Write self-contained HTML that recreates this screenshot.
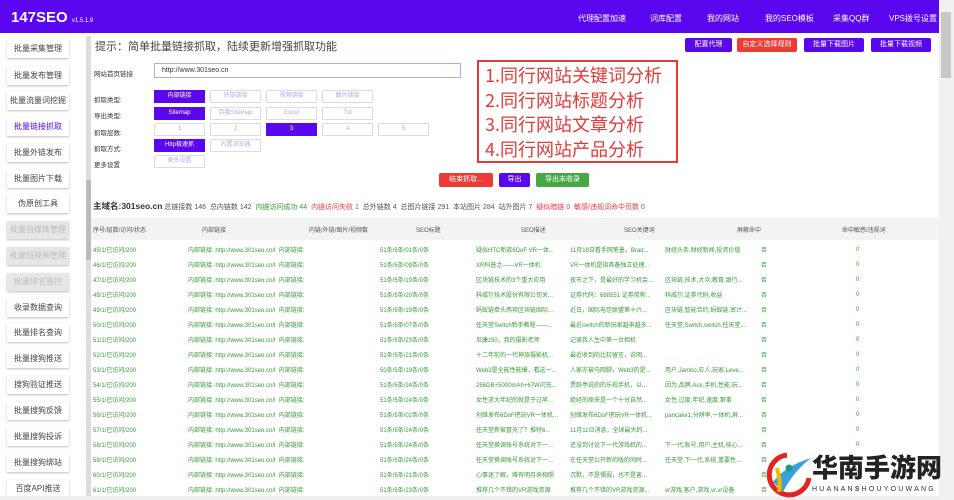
<!DOCTYPE html>
<html><head><meta charset="utf-8"><style>
*{margin:0;padding:0;box-sizing:border-box}
body{width:954px;height:500px;overflow:hidden;background:#fff;font-family:"Liberation Sans","Noto Sans CJK SC",sans-serif;position:relative;color:#333}
.hdr{position:absolute;left:0;top:0;width:939px;height:33px;background:#5a06ee}
.logo{position:absolute;left:11px;top:9px;color:#fff;font-size:15px;font-weight:bold}
.logo small{font-size:6px;font-weight:normal}
.nav{position:absolute;top:13px;color:#fff;font-size:8px}
.sb{position:absolute;left:7px;width:62px;height:18px;background:#fff;box-shadow:0 1px 2px rgba(0,0,0,.25);font-size:8px;color:#444;text-align:center;line-height:18px}
.sb.g{background:#e6e6e6;color:#bbb}
.sb.a{color:#5a06ee}
.vs{position:absolute;left:86px;top:36px;width:5px;height:464px;background:#ddd}
.btn{position:absolute;height:14px;font-size:7px;color:#fff;text-align:center;line-height:14px;border-radius:2px}
.p{background:#5a06ee}.r{background:#ee3a34}.gr{background:#44a844}
.lbl{position:absolute;left:94px;font-size:6.5px;color:#333}
.opt{position:absolute;width:51px;height:13px;border:1px solid #ddd;font-size:6px;color:#b9a6ee;text-align:center;line-height:11px}
.opt.s{background:#5a06ee;color:#fff;border-color:#5a06ee}
.rb{position:absolute;left:477px;top:60px;width:201px;height:103px;border:2px solid #e53a3a;color:#e53a3a;font-size:18px;line-height:24.5px;padding:1px 0 0 6px;white-space:nowrap;font-family:"Noto Sans CJK SC",sans-serif}
.th{position:absolute;left:91px;top:218px;width:848px;height:22px;background:#f3f3f3}
.c{position:absolute;font-size:6px;white-space:nowrap}
.rw{color:#3a9a3a}
</style></head><body>
<div class="hdr"><div class="logo">147SEO <small>v1.5.1.9</small></div>
<div class="nav" style="left:578px">代理配置加速</div>
<div class="nav" style="left:650px">词库配置</div>
<div class="nav" style="left:707px">我的网站</div>
<div class="nav" style="left:765px">我的SEO模板</div>
<div class="nav" style="left:833px">采集QQ群</div>
<div class="nav" style="left:889px">VPS拨号设置</div>
</div>
<div style="position:absolute;left:939px;top:0;width:15px;height:500px;background:#f1f1f1"></div>
<div style="position:absolute;left:941px;top:12px;width:10px;height:66px;background:#c8c8c8"></div>
<div class="vs"></div><div style="position:absolute;left:86px;top:180px;width:5px;height:80px;background:#bbb"></div>

<div class="sb" style="top:40px">批量采集管理</div>
<div class="sb" style="top:67px">批量发布管理</div>
<div class="sb" style="top:92px">批量流量词挖掘</div>
<div class="sb a" style="top:118px">批量链接抓取</div>
<div class="sb" style="top:144px">批量外链发布</div>
<div class="sb" style="top:170px">批量图片下载</div>
<div class="sb" style="top:195px">伪原创工具</div>
<div class="sb g" style="top:221px">批量自媒体管理</div>
<div class="sb g" style="top:247px">批量短视频管理</div>
<div class="sb g" style="top:273px">批量排名监控</div>
<div class="sb" style="top:299px">收录数据查询</div>
<div class="sb" style="top:324px">批量排名查询</div>
<div class="sb" style="top:350px">批量搜狗推送</div>
<div class="sb" style="top:376px">搜狗验证推送</div>
<div class="sb" style="top:402px">批量搜狗反馈</div>
<div class="sb" style="top:428px">批量搜狗投诉</div>
<div class="sb" style="top:454px">批量搜狗绑站</div>
<div class="sb" style="top:480px">百度API推送</div>

<div style="position:absolute;left:95px;top:38px;font-size:11px;color:#444">提示：简单批量链接抓取，陆续更新增强抓取功能</div>
<div class="btn p" style="left:685px;top:38px;width:47px">配置代理</div>
<div class="btn r" style="left:737px;top:38px;width:60px">自定义选择规则</div>
<div class="btn p" style="left:804px;top:38px;width:60px">批量下载图片</div>
<div class="btn p" style="left:871px;top:38px;width:60px">批量下载视频</div>

<div class="lbl" style="top:68px">网站首页链接</div>
<div style="position:absolute;left:154px;top:63px;width:307px;height:15px;border:1px solid #b9a6ee;font-size:7px;padding-left:7px;line-height:13px">http://www.301seo.cn</div>

<div class="lbl" style="top:94px">抓取类型:</div>
<div class="opt s" style="left:154px;top:90px">内部链接</div><div class="opt" style="left:210px;top:90px">外部链接</div><div class="opt" style="left:266px;top:90px">视频链接</div><div class="opt" style="left:322px;top:90px">图片链接</div>
<div class="lbl" style="top:110px">导出类型:</div>
<div class="opt s" style="left:154px;top:107px">Sitemap</div><div class="opt" style="left:210px;top:107px">百度Sitemap</div><div class="opt" style="left:266px;top:107px">Excel</div><div class="opt" style="left:322px;top:107px">Txt</div>
<div class="lbl" style="top:127px">抓取层数:</div>
<div class="opt" style="left:154px;top:123px">1</div><div class="opt" style="left:210px;top:123px">2</div><div class="opt s" style="left:266px;top:123px">3</div><div class="opt" style="left:322px;top:123px">4</div><div class="opt" style="left:378px;top:123px">5</div>
<div class="lbl" style="top:143px">抓取方式:</div>
<div class="opt s" style="left:154px;top:139px">Http极速抓</div><div class="opt" style="left:210px;top:139px">内置浏览器</div>
<div class="lbl" style="top:159px">更多设置</div>
<div class="opt" style="left:154px;top:155px">更多设置</div>

<div class="rb">1.同行网站关键词分析<br>2.同行网站标题分析<br>3.同行网站文章分析<br>4.同行网站产品分析</div>

<div class="btn r" style="left:439px;top:173px;width:54px">结束抓取...</div>
<div class="btn p" style="left:499px;top:173px;width:31px">导出</div>
<div class="btn gr" style="left:536px;top:173px;width:53px">导出未收录</div>

<div style="position:absolute;left:93px;top:200px;font-size:7px;white-space:nowrap;color:#555"><b style="font-size:8.5px;color:#333">主域名:301seo.cn</b> 总链接数 146 &nbsp;总内链数 142 &nbsp;<span style="color:#3a9a3a">内链访问成功 44</span> &nbsp;<span style="color:#ee3a44">内链访问失败 1</span> &nbsp;总外链数 4 &nbsp;总图片链接 291 &nbsp;本站图片 284 &nbsp;站外图片 7 &nbsp;<span style="color:#ee3a44">疑似暗链 0 &nbsp;敏感/违规词命中页数 0</span></div>

<div class="th"></div>
<div class="c" style="left:93px;top:225px;color:#555">序号/层数/访问/状态</div>
<div class="c" style="left:202px;top:225px;color:#555">内部链接</div>
<div class="c" style="left:309px;top:225px;color:#555">内链/外链/图片/视频数</div>
<div class="c" style="left:416px;top:225px;color:#555">SEO标题</div>
<div class="c" style="left:521px;top:225px;color:#555">SEO描述</div>
<div class="c" style="left:624px;top:225px;color:#555">SEO关键词</div>
<div class="c" style="left:737px;top:225px;color:#555">屏蔽命中</div>
<div class="c" style="left:842px;top:225px;color:#555">命中敏感/违规词</div>

<div id="rows"></div>
<script>
var t=["疑似HTC新款6DoF VR一体...","XR科普之——VR一体机","区块链技术的3个重大应用","科威尔技术股份有限公司关...","蚂蚁链牵头两项区块链国际...","任天堂Switch新手教程——...","尼康z50，我的摄影老师","十二年前的一代神族摄影机...","Web3是全能性能爆，看这一...","256GB+5000mAh+67W闪充...","女性求大年纪的就是于过早...","创维发布6DoF把玩VR一体机...","任天堂新被冒充了？推特6...","任天堂换调账号系统对下一...","任天堂换调账号系统对下一...","心事迷了解，难有明月来相照","推荐几个不错的VR游戏资源"];
var d=["11月18日看手网笔墨，Brad...","VR一体机是指具备独立处理...","夜市之下，是最好的学习机会...","证券代码：688551 证券简称...","近日，国际电信联盟第十六...","最近switch的新玩家越来越多...","记录我人生中第一台相机","最近收到的比较留言，说明...","人家亦被马网脚，Web3的是...","贾跃亭说的的乐视手机，以...","绝经的原来是一个十分自然...","创维发布6DoF把玩VR一体机...","11月11日消息，全球最大的...","还没到讨论下一代游戏机的...","在任天堂公开新的版的同时...","沉默，不是懦弱，也不是害...","推荐几个不错的VR游戏资源..."];
var k=["财经头条,财经新闻,投资价值","","区块链,技术,大众,教育,银行...","科威尔,证券代码,收益","区块链,智能合约,蚂蚁链,审计...","任天堂,Switch,switch,任天堂...","","","用户,Jambo,应人,玩家,Leve...","因为,品牌,Ace,手机,性能,玩...","女性,过度,年纪,速度,第事","pancake1,分辨率,一体机,屏...","","下一代,账号,用户,主机,核心...","任天堂,下一代,系统,重要性...","","vr游戏,客户,游戏,vr,vr设备"];
var nb=["01","09","19","20","19","07","23","21","19","24","24","02","24","24","24","21","23"];
var h="";for(var i=0;i<17;i++){var y=245+i*15;
h+='<div class="c rw" style="left:93px;top:'+y+'px">'+(45+i)+'/1/已访问/200</div>'+
'<div class="c rw" style="left:188px;top:'+y+'px">内部链接: http://www.301seo.cn/l &nbsp;内部链接:</div>'+
'<div class="c rw" style="left:380px;top:'+y+'px">'+(i==8?'50':'51')+'条/5条/'+nb[i]+'条/0条</div>'+
'<div class="c rw" style="left:476px;top:'+y+'px">'+t[i]+'</div>'+
'<div class="c rw" style="left:570px;top:'+y+'px">'+d[i]+'</div>'+
'<div class="c rw" style="left:665px;top:'+y+'px">'+k[i]+'</div>'+
'<div class="c rw" style="left:761px;top:'+y+'px">否</div>'+
'<div class="c rw" style="left:856px;top:'+(y+2)+'px">0</div>';}
document.getElementById('rows').innerHTML=h;
</script>
<div style="position:absolute;left:0;top:496px;width:939px;height:4px;background:#eee"></div>

<svg style="position:absolute;left:765px;top:452px" width="50" height="46" viewBox="0 0 50 46">
<path d="M22 3 A20 20 0 1 0 44 26" fill="none" stroke="#e32222" stroke-width="5"/>
<path d="M8 30 Q20 14 46 6 Q28 20 18 40 Z" fill="#3aa0e0"/>
<path d="M12 16 Q16 30 14 40" fill="none" stroke="#f5b800" stroke-width="4"/>
<circle cx="24" cy="16" r="3.5" fill="#1a9a7a"/>
</svg>
<div style="position:absolute;left:812px;top:452px;font-size:26px;font-weight:900;color:#222;white-space:nowrap;font-family:'Noto Sans CJK SC',sans-serif;line-height:30px">华南手游网</div>
<div style="position:absolute;left:812px;top:486px;font-size:7px;color:#333;letter-spacing:2.2px;white-space:nowrap">HUANANSHOUYOUWANG</div>
</body></html>
